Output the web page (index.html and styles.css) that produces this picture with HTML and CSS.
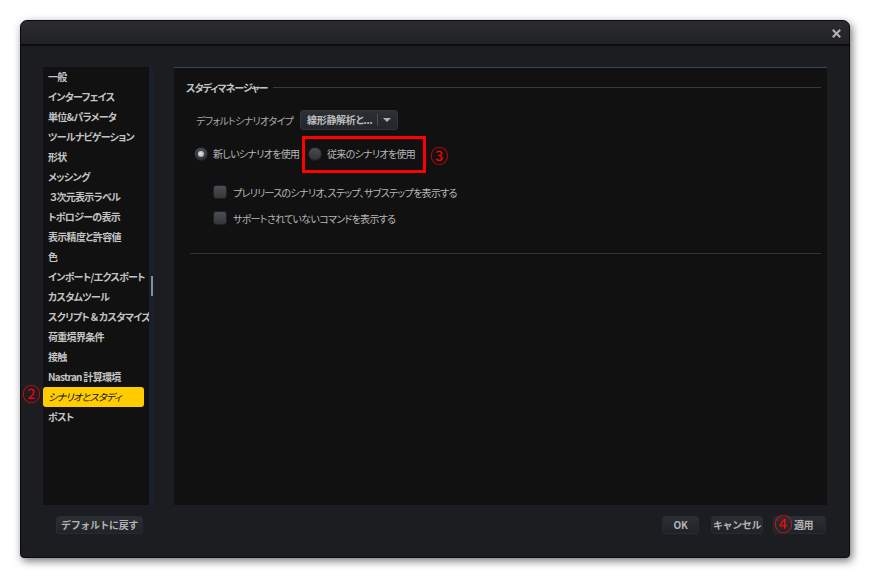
FILE: index.html
```html
<!DOCTYPE html>
<html lang="ja">
<head>
    <meta charset="UTF-8">
    <title>オプション</title>
    <link rel="stylesheet" href="styles.css">
</head>
<body>

    <div class="window">
        <!-- title bar -->
        <div class="titlebar">
            <svg class="close" width="9" height="9" viewBox="0 0 9 9">
                <path d="M1.5 1.5 L7.5 7.5 M7.5 1.5 L1.5 7.5" stroke="#b4b4b4" stroke-width="2" stroke-linecap="square"/>
            </svg>
        </div>

        <div class="dialog-body">
            <div class="panes">
                <!-- category list -->
                <div class="nav">
                    <ul class="nav-list">
                        <li>一般</li>
                        <li>インターフェイス</li>
                        <li>単位&amp;パラメータ</li>
                        <li>ツールナビゲーション</li>
                        <li>形状</li>
                        <li>メッシング</li>
                        <li>&nbsp;３次元表示ラベル</li>
                        <li>トポロジーの表示</li>
                        <li>表示精度と許容値</li>
                        <li>色</li>
                        <li>インポート/エクスポート</li>
                        <li>カスタムツール</li>
                        <li>スクリプト &amp; カスタマイズ</li>
                        <li>荷重境界条件</li>
                        <li>接触</li>
                        <li>Nastran 計算環境</li>
                        <li class="selected">シナリオとスタディ</li>
                        <li>ポスト</li>
                    </ul>
                    <div class="scroll-track"><div class="scroll-thumb"></div></div>
                </div>

                <!-- settings -->
                <div class="content">
                    <div class="group-title">
                        <span>スタディマネージャー</span>
                        <div class="group-line"></div>
                    </div>

                    <div class="type-row">
                        <span class="type-label">デフォルトシナリオタイプ</span>
                        <div class="dropdown">
                            <span class="dropdown-text">線形静解析と...</span>
                            <span class="dropdown-arrow"></span>
                        </div>
                    </div>

                    <div class="radio-row">
                        <label class="option first">
                            <span class="radio checked"></span>
                            <span>新しいシナリオを使用</span>
                        </label>
                        <label class="option">
                            <span class="radio"></span>
                            <span>従来のシナリオを使用</span>
                        </label>
                    </div>

                    <div class="checks">
                        <label class="check-row">
                            <span class="checkbox"></span>
                            <span>プレリリースのシナリオ、ステップ、サブステップを表示する</span>
                        </label>
                        <label class="check-row">
                            <span class="checkbox"></span>
                            <span>サポートされていないコマンドを表示する</span>
                        </label>
                    </div>

                    <div class="separator"></div>
                </div>
            </div>

            <div class="footer">
                <button class="btn btn-default">デフォルトに戻す</button>
                <div class="footer-right">
                    <button class="btn btn-ok">OK</button>
                    <button class="btn btn-cancel">キャンセル</button>
                    <button class="btn btn-apply">適用</button>
                </div>
            </div>
        </div>
    </div>

    <!-- red annotations drawn on top of the screenshot -->
    <div class="mark-box"></div>
    <span class="mark mark-2">②</span>
    <span class="mark mark-3">③</span>
    <span class="mark mark-4">④</span>

</body>
</html>
```

FILE: styles.css
```css
body {
    margin: 0;
    background: #ffffff;
    font-family: "Noto Sans CJK JP", "Noto Sans", sans-serif;
    font-feature-settings: "palt";
    position: relative;
    width: 870px;
    height: 578px;
    overflow: hidden;
}
.window {
    position: absolute;
    left: 20px;
    top: 20px;
    width: 828px;
    height: 536px;
    border: 1px solid #0b0b0c;
    border-radius: 7px 7px 4px 4px;
    background: #1c1d20;
    box-shadow: 2px 3px 8px rgba(0, 0, 0, 0.55);
    display: flex;
    flex-direction: column;
    overflow: hidden;
}
.titlebar {
    height: 23px;
    flex: none;
    background: linear-gradient(#2b2c2f, #212225);
    border-bottom: 2px solid #0c0c0d;
    display: flex;
    align-items: center;
    justify-content: flex-end;
    padding-right: 8px;
}
.close {
    display: block;
    margin-top: 1px;
}
.dialog-body {
    flex: 1;
    display: flex;
    flex-direction: column;
    padding: 21px 22px 0 22px;
}
.panes {
    height: 438px;
    display: flex;
    gap: 20px;
}
.nav {
    display: flex;
    flex: none;
}
.nav-list {
    list-style: none;
    margin: 0;
    padding: 0;
    width: 106px;
    background: #111111;
}
.nav-list li {
    height: 20px;
    line-height: 20px;
    padding-left: 5px;
    margin-right: 5px;
    font-size: 10px;
    font-weight: bold;
    letter-spacing: -0.7px;
    color: #c4c4c4;
    white-space: nowrap;
    border-radius: 3px;
}
.nav-list li.selected {
    background: #ffcc00;
    color: #111111;
    font-style: italic;
    font-weight: normal;
}
.scroll-track {
    width: 5px;
    background: #1a202b;
}
.scroll-thumb {
    width: 2px;
    height: 20px;
    margin: 209px 0 0 2px;
    background: #8a8d92;
}
.content {
    flex: 1;
    background: #111111;
    border-top: 1px solid #3a4759;
    padding: 12px 6px 0 12px;
    white-space: nowrap;
}
.group-title {
    display: flex;
    align-items: center;
    height: 14px;
    font-size: 10px;
    font-weight: bold;
    letter-spacing: -1px;
    color: #c4c4c4;
}
.group-line {
    flex: 1;
    height: 1px;
    background: #3a3a3a;
    margin-left: 6px;
}
.type-row {
    display: flex;
    align-items: center;
    margin-top: 16px;
    padding-left: 10px;
    font-size: 10px;
    letter-spacing: -0.7px;
    color: #a8a8a8;
}
.type-label {
    width: 104px;
}
.dropdown {
    width: 98px;
    height: 20px;
    box-sizing: border-box;
    border: 1px solid #31363d;
    border-radius: 3px;
    background: linear-gradient(#2c3036, #22262b);
    display: flex;
    align-items: center;
    letter-spacing: -0.3px;
}
.dropdown-text {
    flex: 1;
    padding-left: 6px;
    font-weight: bold;
    color: #bdbdbd;
    border-right: 1px solid #4a4f56;
    line-height: 12px;
}
.dropdown-arrow {
    width: 0;
    height: 0;
    margin: 0 6px 0 5px;
    border-left: 4px solid transparent;
    border-right: 4px solid transparent;
    border-top: 4px solid #b0b0b0;
}
.radio-row {
    display: flex;
    align-items: center;
    margin-top: 16px;
    padding-left: 8px;
    font-size: 10px;
    letter-spacing: -0.7px;
    color: #b8b8b8;
}
.option {
    display: flex;
    align-items: center;
    gap: 5px;
}
.option.first {
    width: 114px;
}
.radio {
    width: 14px;
    height: 14px;
    flex: none;
    box-sizing: border-box;
    border-radius: 50%;
    border: 1px solid #1e2022;
    background: linear-gradient(#4a4d51, #2f3235);
    display: flex;
    align-items: center;
    justify-content: center;
}
.radio.checked::after {
    content: "";
    width: 6px;
    height: 6px;
    border-radius: 50%;
    background: radial-gradient(circle at 40% 40%, #e4e4e4, #9a9a9a);
}
.checks {
    margin-top: 24px;
    padding-left: 27px;
    display: flex;
    flex-direction: column;
    gap: 12px;
}
.check-row {
    display: flex;
    align-items: center;
    gap: 6px;
    font-size: 10px;
    letter-spacing: -0.7px;
    color: #b8b8b8;
    height: 14px;
}
.checkbox {
    width: 14px;
    height: 14px;
    flex: none;
    box-sizing: border-box;
    border: 1px solid #1e2022;
    border-radius: 3px;
    background: linear-gradient(#4b4f54, #33363a);
}
.separator {
    height: 1px;
    background: #333333;
    margin: 28px 0 0 4px;
}
.footer {
    display: flex;
    justify-content: space-between;
    padding: 11px 0 0 13px;
}
.footer-right {
    display: flex;
    gap: 10px;
    margin-right: 1px;
}
.btn {
    height: 18px;
    box-sizing: border-box;
    padding: 0;
    border: 1px solid #252c36;
    border-radius: 3px;
    background: linear-gradient(#2b2f34, #1f2327);
    color: #b4b4b4;
    font-family: inherit;
    font-size: 10px;
    font-weight: bold;
    letter-spacing: -0.4px;
    line-height: 16px;
    white-space: nowrap;
}
.btn-default {
    width: 87px;
}
.btn-ok {
    width: 37px;
    margin-right: 2px;
}
.btn-cancel {
    width: 52px;
}
.btn-apply {
    width: 53px;
    padding-left: 8px;
}
.mark-box {
    position: absolute;
    left: 302px;
    top: 136px;
    width: 118px;
    height: 31px;
    border: 3px solid #ff0000;
}
.mark {
    position: absolute;
    width: 18px;
    height: 18px;
    line-height: 18px;
    text-align: center;
    font-family: "DejaVu Serif", "Noto Sans CJK JP", serif;
    font-size: 18px;
    color: #ff0000;
}
.mark-2 {
    left: 22px;
    top: 386px;
}
.mark-3 {
    left: 430px;
    top: 148px;
}
.mark-4 {
    left: 774px;
    top: 516px;
}
```
